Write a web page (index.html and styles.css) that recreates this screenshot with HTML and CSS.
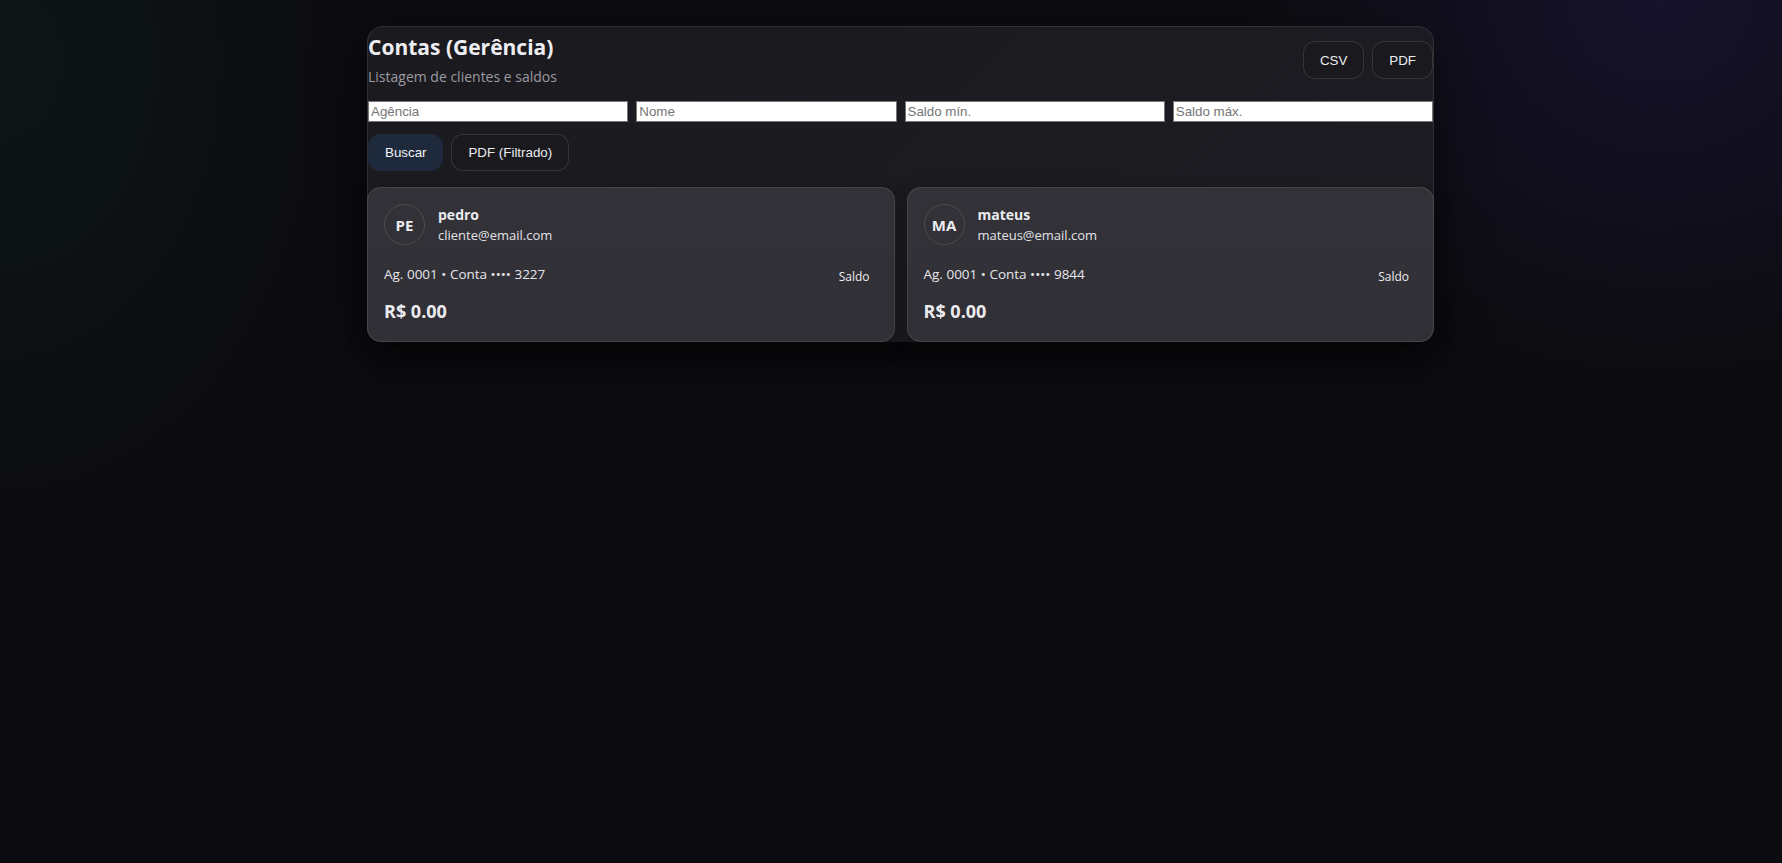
FILE: index.html
```html
<!DOCTYPE html>
<html lang="pt-BR">
<head>
<meta charset="utf-8">
<title>Contas (Gerência)</title>
<link rel="stylesheet" href="styles.css">
</head>
<body>
<main class="panel">
  <header class="head">
    <div class="head-text">
      <h1 class="title">Contas (Gerência)</h1>
      <p class="subtitle">Listagem de clientes e saldos</p>
    </div>
    <div class="head-actions">
      <button class="btn">CSV</button>
      <button class="btn">PDF</button>
    </div>
  </header>
  <div class="filters">
    <input class="field" type="text" placeholder="Agência">
    <input class="field" type="text" placeholder="Nome">
    <input class="field" type="text" placeholder="Saldo mín.">
    <input class="field" type="text" placeholder="Saldo máx.">
  </div>
  <div class="actions">
    <button class="btn btn-primary">Buscar</button>
    <button class="btn">PDF (Filtrado)</button>
  </div>
  <section class="cards">
    <article class="card">
      <div class="card-head">
        <div class="avatar">PE</div>
        <div class="who">
          <div class="name">pedro</div>
          <div class="email">cliente@email.com</div>
        </div>
      </div>
      <div class="card-row">
        <span class="acct">Ag. 0001 • Conta •••• 3227</span>
        <span class="tag">Saldo</span>
      </div>
      <div class="amount">R$ 0.00</div>
    </article>
    <article class="card">
      <div class="card-head">
        <div class="avatar">MA</div>
        <div class="who">
          <div class="name">mateus</div>
          <div class="email">mateus@email.com</div>
        </div>
      </div>
      <div class="card-row">
        <span class="acct">Ag. 0001 • Conta •••• 9844</span>
        <span class="tag">Saldo</span>
      </div>
      <div class="amount">R$ 0.00</div>
    </article>
  </section>
</main>
</body>
</html>
```
FILE: styles.css
```css
html, body {
  margin: 0;
  padding: 0;
  height: 100%;
}
body {
  background-color: #0c0c10;
  background-image:
    radial-gradient(ellipse 420px 380px at 1660px 0px, rgba(60, 40, 140, 0.22), rgba(60, 40, 140, 0) 100%),
    radial-gradient(ellipse 340px 460px at 0px 60px, rgba(20, 90, 60, 0.13), rgba(20, 90, 60, 0) 100%);
  background-repeat: no-repeat;
  font-family: "Open Sans", "Noto Sans", sans-serif;
  color: #e8e8ec;
}
.panel {
  width: 1065px;
  margin: 26px 0 0 367px;
  background: linear-gradient(135deg, #1b1a1f 0%, #1c1b21 70%, #1e1d24 100%);
  border: 1px solid rgba(255, 255, 255, 0.09);
  border-bottom: none;
  border-radius: 16px;
  box-shadow: 0 18px 50px rgba(0, 0, 0, 0.55);
}
.head {
  display: flex;
  justify-content: space-between;
  align-items: center;
  padding-top: 6px;
}
.title {
  margin: 0;
  font-size: 21px;
  font-weight: 700;
  line-height: 28px;
  color: #eeeef2;
}
.subtitle {
  margin: 6px 0 0;
  font-size: 14px;
  line-height: 20px;
  color: #9c9ba3;
}
.head-actions {
  display: flex;
  gap: 8px;
}
.btn {
  font-family: "Liberation Sans", Arial, sans-serif;
  font-size: 13.33px;
  height: 38px;
  padding: 0 16px;
  border-radius: 12px;
  border: 1px solid rgba(255, 255, 255, 0.12);
  background: #1a191e;
  color: #ececf0;
  cursor: pointer;
}
.btn-primary {
  background: #1e2a3b;
  border-color: #1e2a3b;
  color: #f4f6fa;
}
.actions .btn {
  height: 37px;
}
.filters {
  display: grid;
  grid-template-columns: repeat(4, 1fr);
  gap: 8px;
  margin-top: 14px;
}
.field {
  box-sizing: border-box;
  width: 100%;
  height: 21px;
  margin: 0;
  font-family: "Liberation Sans", Arial, sans-serif;
  font-size: 13.33px;
  padding: 1px 2px;
  background: #ffffff;
  border: 1px solid #767676;
  outline: none;
}
.field::placeholder {
  color: #757575;
}
.actions {
  display: flex;
  gap: 8px;
  margin-top: 12px;
}
.cards {
  display: grid;
  grid-template-columns: 1fr 1fr;
  gap: 12px;
  margin: 16px -1px 0;
}
.card {
  background: linear-gradient(180deg, #333238 0%, #313036 100%);
  border: 1px solid rgba(255, 255, 255, 0.1);
  border-radius: 14px;
  padding: 16px 16px 18px;
  box-shadow: 0 6px 18px rgba(0, 0, 0, 0.25);
}
.card-head {
  display: flex;
  align-items: center;
  gap: 13px;
}
.avatar {
  width: 41px;
  height: 41px;
  box-sizing: border-box;
  border-radius: 50%;
  border: 1px solid rgba(255, 255, 255, 0.12);
  display: flex;
  align-items: center;
  justify-content: center;
  font-size: 15px;
  font-weight: 700;
  color: #ececf0;
}
.who {
  display: flex;
  flex-direction: column;
}
.name {
  font-size: 14px;
  font-weight: 700;
  line-height: 20px;
  color: #ececf0;
}
.email {
  font-size: 13px;
  line-height: 20px;
  color: #e2e2e6;
}
.card-row {
  display: flex;
  justify-content: space-between;
  align-items: flex-start;
  margin-top: 20px;
}
.acct {
  font-size: 13.5px;
  line-height: 18px;
  color: #e6e6ea;
}
.tag {
  font-size: 12px;
  line-height: 18px;
  padding: 3px 8px 0;
  color: #ececf0;
}
.amount {
  margin-top: 13px;
  font-size: 18px;
  font-weight: 700;
  line-height: 24px;
  color: #ececf0;
}
```
